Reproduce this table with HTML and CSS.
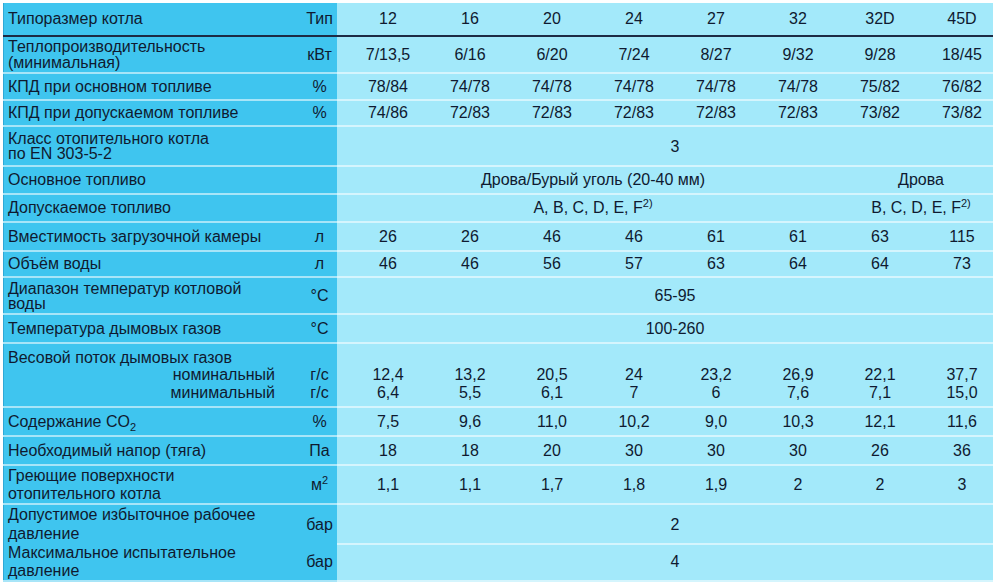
FILE: index.html
```html
<!DOCTYPE html>
<html lang="ru">
<head>
<meta charset="utf-8">
<title>Технические характеристики котлов</title>
<link rel="stylesheet" href="styles.css">
</head>
<body>
<div class="table">
  <div class="row head">
    <div class="lbl">Типоразмер котла</div>
    <div class="unit">Тип</div>
    <div class="c">12</div><div class="c">16</div><div class="c">20</div><div class="c">24</div>
    <div class="c">27</div><div class="c">32</div><div class="c">32D</div><div class="c">45D</div>
  </div>
  <div class="row h37 lh16">
    <div class="lbl"><span>Теплопроизводительность<br>(минимальная)</span></div>
    <div class="unit">кВт</div>
    <div class="c">7/13,5</div><div class="c">6/16</div><div class="c">6/20</div><div class="c">7/24</div>
    <div class="c">8/27</div><div class="c">9/32</div><div class="c">9/28</div><div class="c">18/45</div>
  </div>
  <div class="row h27">
    <div class="lbl">КПД при основном топливе</div>
    <div class="unit">%</div>
    <div class="c">78/84</div><div class="c">74/78</div><div class="c">74/78</div><div class="c">74/78</div>
    <div class="c">74/78</div><div class="c">74/78</div><div class="c">75/82</div><div class="c">76/82</div>
  </div>
  <div class="row h26">
    <div class="lbl">КПД при допускаемом топливе</div>
    <div class="unit">%</div>
    <div class="c">74/86</div><div class="c">72/83</div><div class="c">72/83</div><div class="c">72/83</div>
    <div class="c">72/83</div><div class="c">72/83</div><div class="c">73/82</div><div class="c">73/82</div>
  </div>
  <div class="row h40 lh15">
    <div class="lbl"><span>Класс отопительного котла<br>по EN 303-5-2</span></div>
    <div class="unit"></div>
    <div class="c span8">3</div>
  </div>
  <div class="row h28">
    <div class="lbl">Основное топливо</div>
    <div class="unit"></div>
    <div class="c span6">Дрова/Бурый уголь (20-40 мм)</div>
    <div class="c span2">Дрова</div>
  </div>
  <div class="row h28">
    <div class="lbl">Допускаемое топливо</div>
    <div class="unit"></div>
    <div class="c span6"><span>A, B, C, D, E, F<sup>2)</sup></span></div>
    <div class="c span2"><span>B, C, D, E, F<sup>2)</sup></span></div>
  </div>
  <div class="row h29">
    <div class="lbl">Вместимость загрузочной камеры</div>
    <div class="unit">л</div>
    <div class="c">26</div><div class="c">26</div><div class="c">46</div><div class="c">46</div>
    <div class="c">61</div><div class="c">61</div><div class="c">63</div><div class="c">115</div>
  </div>
  <div class="row h26">
    <div class="lbl">Объём воды</div>
    <div class="unit">л</div>
    <div class="c">46</div><div class="c">46</div><div class="c">56</div><div class="c">57</div>
    <div class="c">63</div><div class="c">64</div><div class="c">64</div><div class="c">73</div>
  </div>
  <div class="row h37 lh15">
    <div class="lbl"><span>Диапазон температур котловой<br>воды</span></div>
    <div class="unit">°C</div>
    <div class="c span8">65-95</div>
  </div>
  <div class="row h29">
    <div class="lbl">Температура дымовых газов</div>
    <div class="unit">°C</div>
    <div class="c span8">100-260</div>
  </div>
  <div class="row h64 lh17">
    <div class="lbl multi">
      <span>Весовой поток дымовых газов</span>
      <span class="sub">номинальный</span>
      <span class="sub">минимальный</span>
    </div>
    <div class="unit multi"><span>&nbsp;</span><span>г/с</span><span>г/с</span></div>
    <div class="c multi"><span>&nbsp;</span><span>12,4</span><span>6,4</span></div>
    <div class="c multi"><span>&nbsp;</span><span>13,2</span><span>5,5</span></div>
    <div class="c multi"><span>&nbsp;</span><span>20,5</span><span>6,1</span></div>
    <div class="c multi"><span>&nbsp;</span><span>24</span><span>7</span></div>
    <div class="c multi"><span>&nbsp;</span><span>23,2</span><span>6</span></div>
    <div class="c multi"><span>&nbsp;</span><span>26,9</span><span>7,6</span></div>
    <div class="c multi"><span>&nbsp;</span><span>22,1</span><span>7,1</span></div>
    <div class="c multi"><span>&nbsp;</span><span>37,7</span><span>15,0</span></div>
  </div>
  <div class="row h29">
    <div class="lbl"><span>Содержание CO<sub>2</sub></span></div>
    <div class="unit">%</div>
    <div class="c">7,5</div><div class="c">9,6</div><div class="c">11,0</div><div class="c">10,2</div>
    <div class="c">9,0</div><div class="c">10,3</div><div class="c">12,1</div><div class="c">11,6</div>
  </div>
  <div class="row h29">
    <div class="lbl">Необходимый напор (тяга)</div>
    <div class="unit">Па</div>
    <div class="c">18</div><div class="c">18</div><div class="c">20</div><div class="c">30</div>
    <div class="c">30</div><div class="c">30</div><div class="c">26</div><div class="c">36</div>
  </div>
  <div class="row h39 lh18">
    <div class="lbl"><span>Греющие поверхности<br>отопительного котла</span></div>
    <div class="unit"><span>м<sup>2</sup></span></div>
    <div class="c">1,1</div><div class="c">1,1</div><div class="c">1,7</div><div class="c">1,8</div>
    <div class="c">1,9</div><div class="c">2</div><div class="c">2</div><div class="c">3</div>
  </div>
  <div class="row h38 lh19">
    <div class="lbl"><span>Допустимое избыточное рабочее<br>давление</span></div>
    <div class="unit">бар</div>
    <div class="c span8">2</div>
  </div>
  <div class="row h39 lh18">
    <div class="lbl"><span>Максимальное испытательное<br>давление</span></div>
    <div class="unit">бар</div>
    <div class="c span8">4</div>
  </div>
</div>
</body>
</html>
```

FILE: styles.css
```css
html, body {
  margin: 0;
  padding: 0;
  background: #ffffff;
}

body {
  font-family: "Liberation Sans", Arial, sans-serif;
  font-size: 16px;
  color: #0f1a30;
}

.table {
  margin: 3px 0 0 3px;
  width: 990px;
  background: #a3e9fa;
}

.row {
  display: grid;
  grid-template-columns: 300px 34px repeat(8, 82px);
  height: 29px;
  line-height: 16px;
}

.row > div {
  display: flex;
  align-items: center;
  border-bottom: 2px solid rgba(255, 255, 255, 0.55);
  white-space: nowrap;
}

.lbl {
  background: #3fc5ef;
  padding-left: 5px;
  box-shadow: inset 1px 0 0 #2fa9d6;
}

.unit {
  background: #3fc5ef;
  justify-content: center;
  padding-right: 1px;
}

.c {
  justify-content: center;
  padding-left: 20px;
}

.head {
  height: 34px;
}

.head > div {
  border-bottom: 2px solid #1d2b44 !important;
}

.span8 { grid-column: span 8; }
.span6 { grid-column: span 6; }
.span2 { grid-column: span 2; }

.h26 { height: 26px; }
.h27 { height: 27px; }
.h28 { height: 28px; }
.h29 { height: 29px; }
.h37 { height: 37px; }
.h38 { height: 38px; }
.h39 { height: 39px; }
.h40 { height: 40px; }
.h64 { height: 64px; }

.lh15 { line-height: 15px; }
.lh16 { line-height: 16px; }
.lh17 { line-height: 17.5px; }
.lh18 { line-height: 18px; }
.lh19 { line-height: 19px; }

.multi {
  flex-direction: column;
  justify-content: center;
}

.lbl.multi {
  align-items: stretch;
  padding-right: 28px;
}

.lbl.multi .sub {
  text-align: right;
}

.c.multi,
.unit.multi {
  align-items: center;
}

sup {
  font-size: 11px;
  line-height: 0;
  vertical-align: 6px;
}

sub {
  font-size: 11px;
  line-height: 0;
  vertical-align: -4px;
}
```
